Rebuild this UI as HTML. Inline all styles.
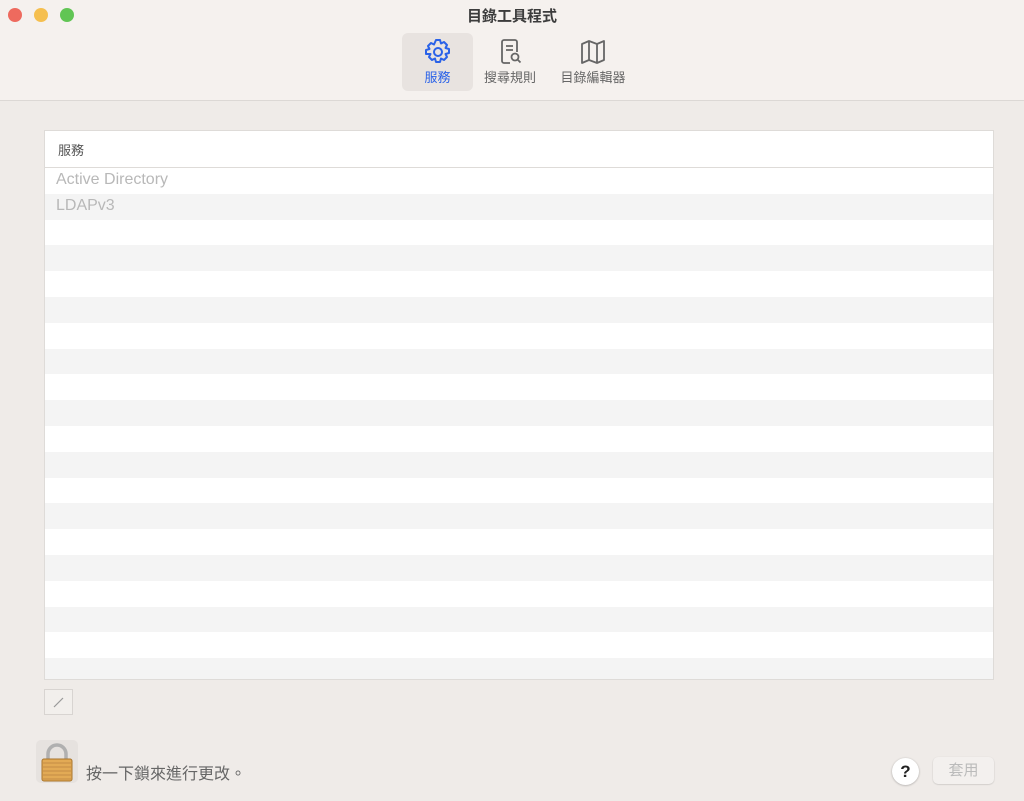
<!DOCTYPE html>
<html><head><meta charset="utf-8"><style>
*{margin:0;padding:0;box-sizing:border-box}
body{width:1024px;height:801px;overflow:hidden;background:#efebe8;font-family:"Liberation Sans","Noto Sans CJK TC",sans-serif;position:relative}
.tb{position:absolute;left:0;top:0;width:1024px;height:101px;background:#f5f1ee;border-bottom:1px solid #dcd8d5}
.dot{position:absolute;top:8px;width:14px;height:14px;border-radius:50%}
.title{position:absolute;left:0;width:1024px;top:5px;text-align:center;font-size:15px;font-weight:bold;color:#3c3c3c}
.tab{position:absolute;top:33px;height:58px;text-align:center;font-size:13px;color:#666}
.tab svg{display:block;margin:5px auto 1px}
.table{position:absolute;left:44px;top:130px;width:950px;height:550px;background:#fff;border:1px solid #dedbd8;overflow:hidden}
.hd{height:37px;border-bottom:1px solid #dedbd8;font-size:13px;color:#555;padding:9px 0 0 13px}
.row{height:25.8px;font-size:16px;color:#b8b8b8;padding:3px 0 0 11px}
</style></head><body>
<div class="tb">
<div class="dot" style="left:8px;background:#ee6a5e"></div>
<div class="dot" style="left:34px;background:#f5bf4f"></div>
<div class="dot" style="left:60px;background:#61c554"></div>
<div class="title">目錄工具程式</div>
<div class="tab" style="left:402px;width:71px;background:#e8e3e0;border-radius:6px;color:#2a62e8">
<svg width="28" height="28" viewBox="0 0 28 28" fill="none" stroke="#2a62e8" stroke-width="2"><path d="M12 2h4l1 3.5 3-1.5 3 3-1.5 3 3.5 1v4l-3.5 1 1.5 3-3 3-3-1.5-1 3.5h-4l-1-3.5-3 1.5-3-3 1.5-3L2 16v-4l3.5-1L4 8l3-3 3 1.5z" stroke-linejoin="round"/><circle cx="14" cy="14" r="4"/></svg>服務</div>
<div class="tab" style="left:478px;width:64px">
<svg width="28" height="28" viewBox="0 0 28 28" fill="none" stroke="#666" stroke-width="1.8"><path d="M14 25H8a2 2 0 0 1-2-2V4a2 2 0 0 1 2-2h11a2 2 0 0 1 2 2v10"/><path d="M10 8h7M10 12h7"/><circle cx="19" cy="19" r="3.5"/><path d="M21.5 21.5l3 3"/></svg>搜尋規則</div>
<div class="tab" style="left:555px;width:76px">
<svg width="28" height="28" viewBox="0 0 28 28" fill="none" stroke="#666" stroke-width="1.8" stroke-linejoin="round"><path d="M3 6l7-3 8 3 7-3v19l-7 3-8-3-7 3z M10 3v19 M18 6v19"/></svg>目錄編輯器</div>
</div>
<div class="table"><div class="hd">服務</div>
<div>
<div class="row" style="background:#fff">Active Directory</div>
<div class="row" style="background:#f4f4f4">LDAPv3</div>
</div>
<div id="r"></div>
</div>
<div style="position:absolute;left:44px;top:689px;width:29px;height:26px;border:1px solid #d8d4d1;background:#f2efec"><svg width="27" height="24"><path d="M9 17l9-9" stroke="#999" stroke-width="1.2"/></svg></div>
<div style="position:absolute;left:36px;top:740px;width:42px;height:43px;background:#e6e2df;border-radius:5px">
<svg width="42" height="43" viewBox="0 0 42 43"><path d="M12 20v-6a9 9 0 0 1 18 0v6" fill="none" stroke="#b0b0b0" stroke-width="3.5"/><rect x="6" y="19" width="30" height="22" rx="2" fill="#e2aa55" stroke="#a8742c"/><path d="M7 23h28M7 27h28M7 31h28M7 35h28M7 39h28" stroke="#c48c45" stroke-width="1"/></svg></div>
<div style="position:absolute;left:86px;top:760px;font-size:16px;color:#666">按一下鎖來進行更改。</div>
<div style="position:absolute;left:892px;top:758px;width:27px;height:27px;border-radius:50%;background:#fff;box-shadow:0 0.5px 2px rgba(0,0,0,.3);text-align:center;font-size:17px;font-weight:bold;line-height:27px;color:#222">?</div>
<div style="position:absolute;left:933px;top:757px;width:61px;height:27px;border-radius:5px;background:#f3f0ee;box-shadow:0 0.5px 1.5px rgba(0,0,0,.2);text-align:center;font-size:15px;line-height:27px;color:#bbb">套用</div>
<script>
var h='';for(var i=2;i<20;i++)h+='<div class="row" style="background:'+(i%2?'#f4f4f4':'#fff')+'"></div>';
document.getElementById('r').innerHTML=h;
</script>
</body></html>
